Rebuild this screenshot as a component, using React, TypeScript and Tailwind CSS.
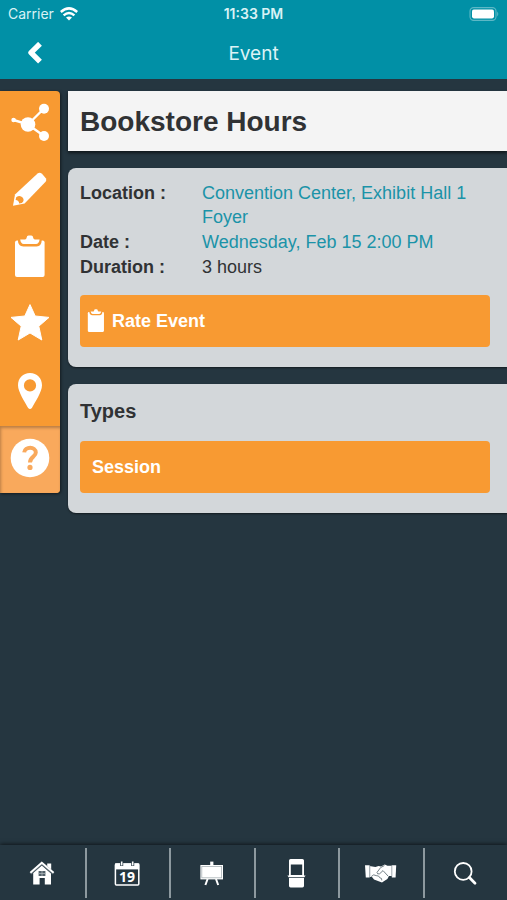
import React from 'react';

interface IconProps {
  className?: string;
}

const ShareIcon: React.FC = () => (
  <svg viewBox="0 0 44 44" className="w-11 h-11" fill="currentColor" stroke="currentColor" aria-hidden="true">
    <path d="M5.5 19 L20 23.5 L36 7.5 M20 23.5 L36 35" fill="none" strokeWidth="2.4" />
    <circle cx="20" cy="23.5" r="7.3" stroke="none" />
    <circle cx="36" cy="7.8" r="5" stroke="none" />
    <circle cx="36" cy="35" r="5" stroke="none" />
    <circle cx="5.6" cy="19" r="2.3" stroke="none" />
  </svg>
);

const PencilIcon: React.FC = () => (
  <svg viewBox="0 0 44 44" className="w-11 h-11" fill="currentColor" aria-hidden="true">
    <path d="M5 37.8 L7 26.4 L29.6 5.4 Q31.8 4 34 5.8 L37.8 10.2 Q39 12 37.6 13.8 L16.6 35.4 Z" />
    <path d="M8.2 29.2 Q12 26.4 14.6 29.6 Q17 32.6 13.8 35 L11.2 35.4 Q10.8 32.4 7.6 32 Z" fill="#f89a32" />
  </svg>
);

const ClipboardIcon: React.FC<IconProps> = ({ className = 'w-11 h-11' }) => (
  <svg viewBox="0 0 44 44" className={className} fill="currentColor" aria-hidden="true">
    <rect x="7" y="5.6" width="29.6" height="36.4" rx="2" />
    <path d="M9.8 4.5 H33.8 Q33.6 11.4 28.6 11.4 H15.4 Q10 11.4 9.8 4.5 Z" fill="#f89a32" />
    <path d="M12.2 4.6 H17 Q18.4 4.4 18.6 2.8 Q18.8 0.6 20.6 0.6 H23.2 Q25 0.6 25.2 2.8 Q25.4 4.4 27 4.6 H31.6 Q31 9 28 9 H15.8 Q12.8 9 12.2 4.6 Z" />
  </svg>
);

const StarIcon: React.FC = () => (
  <svg viewBox="0 0 44 44" className="w-11 h-11" fill="currentColor" stroke="currentColor" strokeWidth="1" strokeLinejoin="round" aria-hidden="true">
    <path d="M22 2.6 L27.2 14 L41 15.4 L30.8 24.2 L33.8 38 L22 31 L10.2 38 L13.2 24.2 L3 15.4 L16.8 14 Z" />
  </svg>
);

const PinIcon: React.FC = () => (
  <svg viewBox="0 0 44 44" className="w-11 h-11" fill="currentColor" aria-hidden="true">
    <path
      fillRule="evenodd"
      d="M22 4 C29 4 34 9.2 34 16.2 C34 23 27 33 24 38.8 Q22 41.2 20 38.8 C17 33 10 23 10 16.2 C10 9.2 15 4 22 4 Z M22 10.3 A6.1 6.1 0 1 0 22 22.5 A6.1 6.1 0 1 0 22 10.3 Z"
    />
  </svg>
);

const HelpIcon: React.FC = () => (
  <svg viewBox="0 0 44 44" className="w-11 h-11" aria-hidden="true">
    <circle cx="22" cy="22" r="19.3" fill="currentColor" />
    <path d="M16.2 16.4 C16.8 10.4 27.8 10.2 27.8 16.6 C27.8 21 22 20.4 22 26.6" fill="none" stroke="#f9a95c" strokeWidth="4" />
    <circle cx="22" cy="31.4" r="2.6" fill="#f9a95c" />
  </svg>
);

const HomeIcon: React.FC = () => (
  <svg viewBox="0 0 32 32" className="w-8 h-8" fill="currentColor" aria-hidden="true">
    <path d="M21.2 6.4 H25.2 V13 L21.2 9.4 Z" />
    <path d="M7.2 16 L15.8 8.4 L25 16.4 V27.4 H18.8 V21 H13.6 V27.4 H7.2 Z" />
    <path d="M4.4 16.4 L15.8 6.4 L27.6 16.4" fill="none" stroke="#5f6d75" strokeWidth="2.8" />
    <path d="M4.4 15.8 L15.8 5.8 L27.6 15.8" fill="none" stroke="currentColor" strokeWidth="1.8" />
    <path d="M12.6 14 H19.4 V19 H12.6 Z" fill="#52616a" />
    <path d="M16 14 V19 M12.6 16.5 H19.4" fill="none" stroke="#aab3b8" strokeWidth="0.8" />
  </svg>
);

const CalendarIcon: React.FC = () => (
  <svg viewBox="0 0 32 32" className="w-8 h-8" fill="currentColor" aria-hidden="true">
    <rect x="3.4" y="7" width="23.4" height="21" rx="1" fill="none" stroke="currentColor" strokeWidth="1.5" />
    <path d="M3 6.4 H27.2 V12.4 H3 Z" />
    <path d="M9.7 4.4 V9 M20.7 4.4 V9" stroke="#253640" strokeWidth="3" />
    <path d="M9.7 4.4 V8.6 M20.7 4.4 V8.6" stroke="currentColor" strokeWidth="1.6" />
    <text x="15" y="25" textAnchor="middle" fontSize="14" fontWeight="700" fontFamily="Noto Sans, sans-serif">
      19
    </text>
  </svg>
);

const EaselIcon: React.FC = () => (
  <svg viewBox="0 0 32 32" className="w-8 h-8" fill="currentColor" aria-hidden="true">
    <path d="M14.2 4.6 H17.4 V9 H14.2 Z" />
    <rect x="4.4" y="8" width="22.6" height="14.4" />
    <rect x="5.8" y="9.4" width="19.8" height="11.4" fill="none" stroke="#a9b2b6" strokeWidth="0.8" />
    <path d="M11.6 22 L9.4 28 M20 22 L22.2 28" stroke="currentColor" strokeWidth="2" />
  </svg>
);

const PhoneIcon: React.FC = () => (
  <svg viewBox="0 0 32 32" className="w-8 h-8" fill="currentColor" aria-hidden="true">
    <path fillRule="evenodd" d="M9.6 2 H21.4 Q23 2 23 3.6 V19 H8 V3.6 Q8 2 9.6 2 Z M9.8 7.4 V18 H21.2 V7.4 Z" />
    <path d="M6.4 18.4 H24.6 L23.4 20.2 H7.6 Z" />
    <path d="M8 21 H23 V28.8 Q23 30.4 21.4 30.4 H9.6 Q8 30.4 8 28.8 Z" />
  </svg>
);

const HandshakeIcon: React.FC = () => (
  <svg viewBox="0 0 32 32" className="w-8 h-8" fill="currentColor" aria-hidden="true">
    <path d="M0 8.2 H4.6 V20.4 H0.8 Z" />
    <path d="M31.2 8.2 H26.8 V20.4 H30.6 Z" />
    <path d="M4.4 9 L10.4 10 L13.6 9 L16 9.6 L19.8 7.4 L22.4 8.8 H27 V19 H24 L22.4 22 L19.2 24 L17 25.6 L13.6 24.2 L9 22.6 L7 20 H4.4 Z" />
    <path d="M4.8 8.4 V20 M26.8 8.4 V19.6" stroke="#77848b" strokeWidth="0.7" />
    <path d="M19.4 8.6 L15.6 10.6 L12 15.4 Q12 17.6 14.6 16.8 L18 13.6 L23.2 19.2" fill="none" stroke="#66747b" strokeWidth="0.9" />
    <path d="M6.2 19.6 Q8.6 16.6 11.2 18.6 Q14.2 18.4 14.8 20.8 Q17.2 20.8 16.8 23.4" fill="none" stroke="#66747b" strokeWidth="0.9" />
  </svg>
);

const SearchIcon: React.FC = () => (
  <svg viewBox="0 0 32 32" className="w-8 h-8" fill="none" stroke="currentColor" strokeLinecap="round" aria-hidden="true">
    <circle cx="13.2" cy="14.4" r="8.4" strokeWidth="1.8" />
    <path d="M19.4 20.6 L25 26.2" strokeWidth="2.8" />
  </svg>
);

const actions = [
  { label: 'Share', icon: ShareIcon },
  { label: 'Notes', icon: PencilIcon },
  { label: 'Survey', icon: ClipboardIcon },
  { label: 'Favorite', icon: StarIcon },
  { label: 'Map', icon: PinIcon },
  { label: 'Help', icon: HelpIcon, active: true },
];

const tabs = [
  { label: 'Home', icon: HomeIcon },
  { label: 'Schedule', icon: CalendarIcon },
  { label: 'Sessions', icon: EaselIcon },
  { label: 'Exhibitors', icon: PhoneIcon },
  { label: 'Networking', icon: HandshakeIcon },
  { label: 'Search', icon: SearchIcon },
];

const StatusBar: React.FC = () => (
  <div className="grid grid-cols-3 items-center h-7 px-2 font-['Inter',sans-serif] text-sm text-[#d9f2f5]">
    <div className="flex items-center gap-1.5">
      <span>Carrier</span>
      <svg viewBox="0 0 18 14" className="w-[18px] h-3.5" fill="none" stroke="white" strokeWidth="2.5" aria-hidden="true">
        <path d="M0.8 5 Q9 -2.2 17.2 5" />
        <path d="M3.6 8.4 Q9 3.6 14.4 8.4" />
        <path d="M9 13.6 L6 10.6 Q9 8.2 12 10.6 Z" fill="white" stroke="none" />
      </svg>
    </div>
    <span className="text-center font-semibold">11:33 PM</span>
    <svg viewBox="0 0 30 14" className="w-[30px] h-3.5 justify-self-end" aria-hidden="true">
      <rect x="1" y="0.6" width="26" height="12.8" rx="3.6" fill="none" stroke="#5db8c6" strokeWidth="1.1" />
      <rect x="3" y="2.6" width="22" height="8.8" rx="1.8" fill="white" />
      <path d="M28.2 4.6 Q30.4 7 28.2 9.4 Z" fill="#5db8c6" />
    </svg>
  </div>
);

const Header: React.FC = () => (
  <header className="bg-[#0190a6]">
    <StatusBar />
    <div className="grid grid-cols-3 items-center h-[51px]">
      <button type="button" aria-label="Back" className="justify-self-start pl-6 text-white">
        <svg viewBox="0 0 22 24" className="w-[22px] h-6" fill="none" stroke="currentColor" strokeWidth="5.4" strokeLinejoin="round" aria-hidden="true">
          <path d="M16 1.8 L7 10.6 L16 19.6" />
        </svg>
      </button>
      <h1 className="pt-0.5 text-center font-['Inter',sans-serif] text-[19px] text-[#dcf3f6]">Event</h1>
    </div>
  </header>
);

const ActionBar: React.FC = () => (
  <aside className="w-[60px] shrink-0 self-start overflow-hidden rounded-r bg-[#f89a32] text-white shadow-[1px_1px_3px_rgba(0,0,0,0.5)]">
    {actions.map(({ label, icon: Icon, active }) => (
      <button
        key={label}
        type="button"
        aria-label={label}
        className={`flex h-[67px] w-full items-center justify-center pb-1 ${
          active ? 'bg-[#f9a95c] shadow-[inset_1px_2px_3px_rgba(0,0,0,0.25)]' : ''
        }`}
      >
        <Icon />
      </button>
    ))}
  </aside>
);

const EventDetails: React.FC = () => (
  <section className="rounded-l-lg bg-[#d3d7da] pt-[13px] pr-[17px] pb-5 pl-3 shadow-[0_1px_2px_rgba(0,0,0,0.5)]">
    <dl className="grid grid-cols-[122px_1fr] gap-y-px text-lg leading-6">
      <dt className="font-bold">Location :</dt>
      <dd>
        <a href="#location" className="text-[#1b93a8]">
          Convention Center, Exhibit Hall 1 Foyer
        </a>
      </dd>
      <dt className="font-bold">Date :</dt>
      <dd>
        <a href="#date" className="text-[#1b93a8]">
          Wednesday, Feb 15 2:00 PM
        </a>
      </dd>
      <dt className="font-bold">Duration :</dt>
      <dd>3 hours</dd>
    </dl>
    <button
      type="button"
      className="mt-4 flex h-[52px] w-full items-center gap-1 rounded bg-[#f89a32] px-1 text-lg font-bold text-white"
    >
      <ClipboardIcon className="w-6 h-6" />
      <span>Rate Event</span>
    </button>
  </section>
);

const EventTypes: React.FC = () => (
  <section className="rounded-l-lg bg-[#d3d7da] pt-[13px] pr-[17px] pb-5 pl-3 shadow-[0_1px_2px_rgba(0,0,0,0.5)]">
    <h3 className="text-xl leading-7 font-bold">Types</h3>
    <button
      type="button"
      className="mt-4 flex h-[52px] w-full items-center rounded bg-[#f89a32] px-3 text-lg font-bold text-white"
    >
      Session
    </button>
  </section>
);

const TabBar: React.FC = () => (
  <nav className="mt-auto grid grid-cols-6 bg-[#253640] pt-[3px] pb-0.5 text-white shadow-[0_-1px_4px_rgba(0,0,0,0.6)]">
    {tabs.map(({ label, icon: Icon }) => (
      <a
        key={label}
        href={`#${label.toLowerCase()}`}
        aria-label={label}
        className="flex h-[50px] items-center justify-center border-l-2 border-[#8d999f] first:border-l-0"
      >
        <Icon />
      </a>
    ))}
  </nav>
);

export default function App() {
  return (
    <div className="flex min-h-screen flex-col bg-[#253640] font-['Liberation_Sans',Arial,sans-serif] text-[#303234]">
      <Header />
      <main className="flex gap-2 pt-3 pb-4">
        <ActionBar />
        <div className="flex min-w-0 flex-1 flex-col gap-[17px]">
          <h2 className="flex h-[60px] items-center bg-[#f4f4f4] px-3 pt-0.5 text-[28px] font-bold shadow-[0_2px_3px_rgba(0,0,0,0.6)]">
            Bookstore Hours
          </h2>
          <EventDetails />
          <EventTypes />
        </div>
      </main>
      <TabBar />
    </div>
  );
}
